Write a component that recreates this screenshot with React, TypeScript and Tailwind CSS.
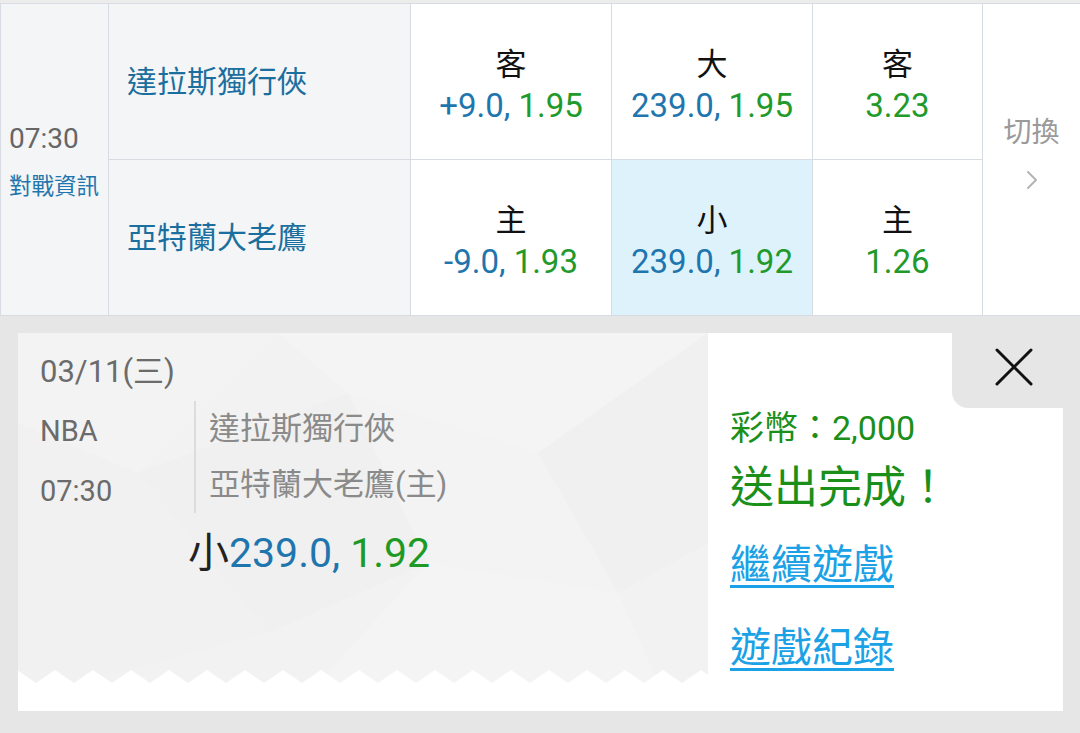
import React from "react";

const BLUE = "text-[#1f76ae]";
const GREEN = "text-[#229a2b]";

function Odds({ label, a, b, selected }: { label: string; a?: string; b: string; selected?: boolean }) {
  return (
    <div className={`flex flex-col items-center pt-[40px] ${selected ? "bg-[#def2fc]" : "bg-white"} h-full`}>
      <div className="text-[31px] leading-[41px] text-[#111]">{label}</div>
      <div className="text-[33px] leading-[42px] whitespace-nowrap">
        {a && <span className={BLUE}>{a}</span>}
        <span className={GREEN}>{b}</span>
      </div>
    </div>
  );
}

function Row({ team, cells }: { team: string; cells: { label: string; a?: string; b: string; selected?: boolean }[] }) {
  return (
    <div className="flex h-[156px] border-b border-[#d6dce1]">
      <div className="w-[302px] shrink-0 border-r border-[#d6dce1] bg-[#f4f5f6] flex items-center pl-[18px]">
        <span className="text-[30px] leading-[40px] text-[#1b6f9e]">{team}</span>
      </div>
      <div className="w-[201px] shrink-0 border-r border-[#d6dce1]">
        <Odds {...cells[0]} />
      </div>
      <div className="w-[201px] shrink-0 border-r border-[#d6dce1]">
        <Odds {...cells[1]} />
      </div>
      <div className="w-[170px] shrink-0 border-r border-[#d6dce1]">
        <Odds {...cells[2]} />
      </div>
    </div>
  );
}

export default function App() {
  return (
    <div className="w-[1080px] h-[733px] bg-[#e6e6e6] overflow-hidden font-['Roboto','Noto_Sans_CJK_TC',sans-serif]">
      <div className="h-[3px] bg-[#ececec]" />
      {/* match table */}
      <div className="flex h-[313px] border-t border-l border-[#d6dce1] bg-white">
        <div className="w-[108px] shrink-0 border-r border-b border-[#d6dce1] bg-[#f4f5f6] flex flex-col justify-center pl-[8px] pt-[6px]">
          <div className="text-[28px] leading-[46px] text-[#666]">07:30</div>
          <div className="text-[22.5px] leading-[48px] text-[#1f76ae] whitespace-nowrap">對戰資訊</div>
        </div>
        <div className="w-[874px] shrink-0 flex flex-col">
          <Row
            team="達拉斯獨行俠"
            cells={[
              { label: "客", a: "+9.0, ", b: "1.95" },
              { label: "大", a: "239.0, ", b: "1.95" },
              { label: "客", b: "3.23" },
            ]}
          />
          <Row
            team="亞特蘭大老鷹"
            cells={[
              { label: "主", a: "-9.0, ", b: "1.93" },
              { label: "小", a: "239.0, ", b: "1.92", selected: true },
              { label: "主", b: "1.26" },
            ]}
          />
        </div>
        <div className="flex-1 border-b border-[#d6dce1] bg-white flex flex-col items-center pt-[109px]">
          <div className="text-[28px] leading-[40px] text-[#9a9a9a]">切換</div>
          <svg className="mt-[15px]" width="14" height="24" viewBox="0 0 14 24" fill="none">
            <path d="M3 4 L11 12 L3 20" stroke="#b4b4b4" strokeWidth="2" strokeLinecap="round" strokeLinejoin="round" />
          </svg>
        </div>
      </div>

      {/* ticket */}
      <div className="pt-[17px] pl-[18px] pr-[17px]">
        <div className="flex h-[378px]">
          {/* left ticket */}
          <div className="w-[690px] shrink-0 flex flex-col">
            <div className="relative flex-1 bg-[#f2f2f2] overflow-hidden">
              <svg className="absolute inset-0" width="690" height="350" viewBox="0 0 690 350">
                <polygon points="0,0 260,0 120,140 0,90" fill="#f3f3f3" />
                <polygon points="260,0 690,0 520,120 330,60" fill="#f4f4f4" />
                <polygon points="120,140 330,60 410,230 250,300" fill="#f0f0f0" />
                <polygon points="0,90 120,140 250,300 60,350 0,350" fill="#f1f1f1" />
                <polygon points="520,120 690,0 690,210 600,260" fill="#f0f0f0" />
                <polygon points="410,230 600,260 640,350 300,350" fill="#f4f4f4" />
                <polygon points="330,60 520,120 600,260 410,230" fill="#f3f3f3" />
              </svg>
              <svg className="absolute left-0 bottom-0" width="690" height="13" viewBox="0 0 690 13">
                <defs>
                  <pattern id="zig" x="18" y="0" width="38" height="13" patternUnits="userSpaceOnUse">
                    <polygon points="0,13 19,0 38,13" fill="#ffffff" />
                  </pattern>
                </defs>
                <rect x="0" y="0" width="690" height="13" fill="url(#zig)" />
              </svg>
              <div className="relative pl-[22px]">
                <div className="mt-[17px] text-[31px] leading-[44px] text-[#6b6b6b]">03/11(三)</div>
                <div className="mt-[7px] flex items-start">
                  <div className="w-[154px] shrink-0 text-[29px] text-[#6b6b6b]">
                    <div className="leading-[60px]">NBA</div>
                    <div className="leading-[60px]">07:30</div>
                  </div>
                  <div className="border-l-2 border-[#dcdcdc] pl-[13px] text-[31px] text-[#8a8a8a]">
                    <div className="leading-[56px]">達拉斯獨行俠</div>
                    <div className="leading-[56px]">亞特蘭大老鷹(主)</div>
                  </div>
                </div>
                <div className="mt-[8px] pl-[148px] text-[41px] leading-[48px] whitespace-nowrap">
                  <span className="text-[#222]">小</span>
                  <span className="text-[#1f76ae]">239.0, </span>
                  <span className="text-[#1d9a26]">1.92</span>
                </div>
              </div>
            </div>
            <div className="h-[28px] bg-white" />
          </div>
          {/* right panel */}
          <div className="flex-1 bg-white flex flex-col">
            <div className="flex h-[75px]">
              <div className="flex-1" />
              <div className="w-[111px] bg-[#e6e6e6] rounded-bl-[16px] flex items-center justify-center pl-[12px] pb-[8px]">
                <svg width="38" height="38" viewBox="0 0 38 38" fill="none">
                  <path d="M2 2 L36 36 M36 2 L2 36" stroke="#111" strokeWidth="3" strokeLinecap="round" />
                </svg>
              </div>
            </div>
            <div className="pl-[22px]">
              <div className="text-[34px] leading-[40px] text-[#1a8f1a] whitespace-nowrap">彩幣：2,000</div>
              <div className="mt-[8px] text-[44px] leading-[64px] text-[#1a8f1a] whitespace-nowrap">送出完成！</div>
              <div className="mt-[17px] text-[41px] leading-[56px] text-[#1aa1e6] underline decoration-[3px] underline-offset-[6px]">繼續遊戲</div>
              <div className="mt-[27px] text-[41px] leading-[56px] text-[#1aa1e6] underline decoration-[3px] underline-offset-[6px]">遊戲紀錄</div>
            </div>
          </div>
        </div>
      </div>
    </div>
  );
}
